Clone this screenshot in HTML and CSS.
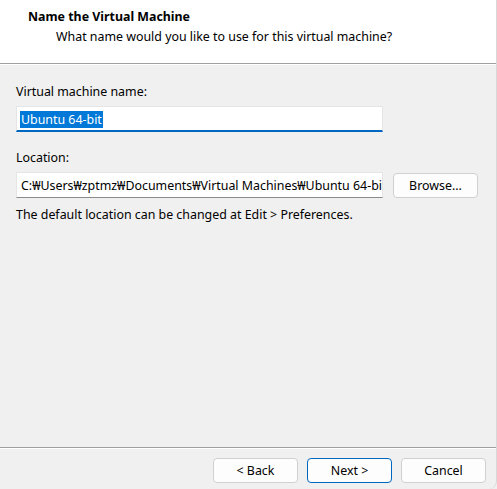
FILE: index.html
```html
<!DOCTYPE html>
<html lang="en">
<head>
  <meta charset="UTF-8" />
  <title>New Virtual Machine Wizard</title>
  <link rel="stylesheet" href="styles.css">
</head>
<body>
  <div class="wizard">
    <div class="header">
      <h1>Name the Virtual Machine</h1>
      <p>What name would you like to use for this virtual machine?</p>
    </div>

    <div class="content">
      <label class="field-label" for="vmname">Virtual machine name:</label>
      <div class="textbox focused">
        <span class="selected">Ubuntu 64-bit</span>
      </div>

      <label class="field-label location-label" for="location">Location:</label>
      <div class="location-row">
        <div class="textbox">
          <span class="path">C:&#8361;Users&#8361;zptmz&#8361;Documents&#8361;Virtual Machines&#8361;Ubuntu 64-bit</span>
        </div>
        <button class="btn browse">Browse...</button>
      </div>
      <p class="hint">The default location can be changed at Edit &gt; Preferences.</p>
    </div>

    <div class="footer">
      <button class="btn">&lt; Back</button>
      <button class="btn default">Next &gt;</button>
      <button class="btn">Cancel</button>
    </div>
  </div>
</body>
</html>
```

FILE: styles.css
```css
html, body {
  margin: 0;
  padding: 0;
  height: 100%;
}

body {
  font-family: "Noto Sans", "Open Sans", sans-serif;
  font-size: 12.4px;
  color: #000;
  background: #f0f0f0;
}

.wizard {
  display: flex;
  flex-direction: column;
  height: 489px;
  width: 497px;
  box-sizing: border-box;
  border-right: 1px solid #d8d8d8;
  border-bottom-right-radius: 8px;
  overflow: hidden;
}

.header {
  background: #fff;
  height: 64px;
  box-sizing: border-box;
  padding: 8px 0 0 28px;
  border-bottom: 1px solid #a0a0a0;
  box-shadow: 0 1px 0 #fff;
}

.header h1 {
  margin: 0;
  font-size: 12.4px;
  font-weight: bold;
  line-height: 18px;
}

.header p {
  margin: 2px 0 0 28px;
  line-height: 18px;
}

.content {
  flex: 1;
  padding: 19px 16px 0 16px;
}

.field-label {
  display: block;
  line-height: 18px;
}

.location-label {
  margin-top: 17px;
}

.textbox {
  width: 367px;
  height: 26px;
  box-sizing: border-box;
  margin-top: 5px;
  background: #fff;
  border: 1px solid #e5e5e5;
  border-bottom: 1px solid #8a8a8a;
  padding: 0 3px;
  display: flex;
  align-items: center;
  overflow: hidden;
  white-space: nowrap;
}

.textbox.focused {
  border-bottom: 2px solid #0067c0;
  padding-top: 1px;
}

.selected {
  background: #0078d7;
  color: #fff;
  line-height: 17px;
  padding: 0 1px;
}

.location-row {
  display: flex;
  align-items: center;
  gap: 10px;
}

.location-row .textbox {
  flex: none;
}

.path {
  padding-left: 1px;
}

.hint {
  margin: 8px 0 0;
  line-height: 18px;
}

.btn {
  font-family: inherit;
  font-size: 12.4px;
  color: #000;
  background: #fdfdfd;
  border: 1px solid #d0d0d0;
  border-radius: 4px;
  width: 85px;
  height: 25px;
  padding: 0;
  margin: 0;
}

.browse {
  margin-top: 5px;
}

.btn.default {
  border: 1px solid #0067c0;
}

.footer {
  height: 42px;
  display: flex;
  justify-content: flex-end;
  align-items: flex-start;
  gap: 9px;
  padding: 10px 10px 0 0;
  box-sizing: border-box;
  border-top: 1px solid #a0a0a0;
  box-shadow: inset 0 1px 0 #fff;
}
```
